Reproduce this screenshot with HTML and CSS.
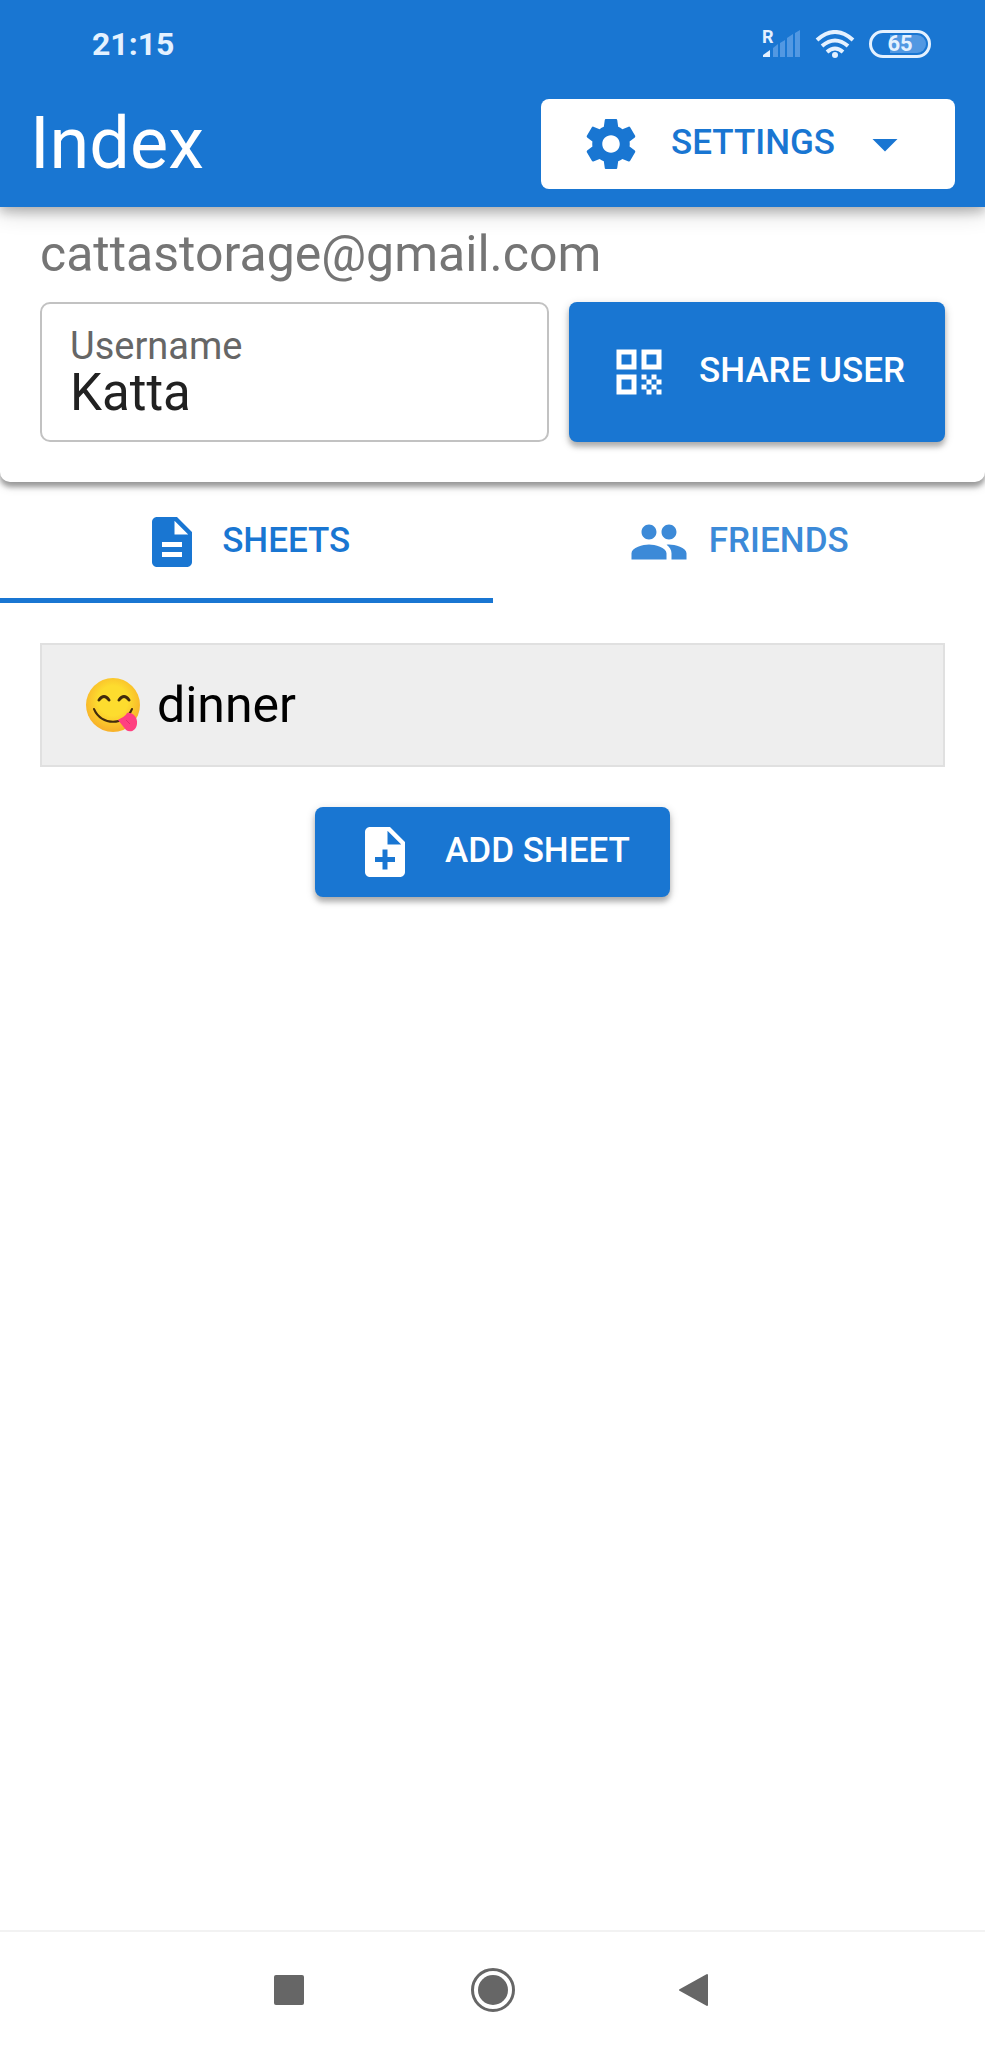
FILE: index.html
```html
<!DOCTYPE html>
<html lang="en">
<head>
<meta charset="utf-8">
<meta name="viewport" content="width=device-width, initial-scale=1">
<title>Index</title>
<link rel="stylesheet" href="styles.css">
</head>
<body>
<div class="app">
  <header class="header">
    <div class="status">
      <time class="clock">21:15</time>
      <div class="indicators">
        <svg class="signal" viewBox="0 0 38 28" role="img" aria-label="Roaming, weak signal">
          <text class="roaming" x="-1" y="13">R</text>
          <path fill="#e4f1ff" d="M0 27V25L7 20V27z"/>
          <path fill="#5298e2" d="M10 27V18L15 14V27zM17 27V13L22 10V27zM24 27V8L30 4V27zM32 27V3L37 0V27z"/>
        </svg>
        <svg class="wifi" viewBox="0 0 40 28" role="img" aria-label="Wi-Fi">
          <g fill="none" stroke="#e4f1ff" stroke-width="4">
            <path d="M2 10Q20 -6 38 10"/>
            <path d="M7 16Q20 5 33 16"/>
            <path d="M12 22Q20 15 28 22"/>
          </g>
          <circle cx="20" cy="25" r="3" fill="#e4f1ff"/>
        </svg>
        <div class="battery">65</div>
      </div>
    </div>
    <div class="toolbar">
      <h1 class="title">Index</h1>
      <button class="btn btn-light" type="button">
        <svg class="icon" viewBox="0 0 24 24" aria-hidden="true"><path d="M19.43 12.98c.04-.32.07-.64.07-.98s-.03-.66-.07-.98l2.11-1.65c.19-.15.24-.42.12-.64l-2-3.46c-.12-.22-.39-.3-.61-.22l-2.49 1c-.52-.4-1.08-.73-1.69-.98l-.38-2.65C14.46 2.18 14.25 2 14 2h-4c-.25 0-.46.18-.49.42l-.38 2.65c-.61.25-1.17.59-1.69.98l-2.49-1c-.23-.09-.49 0-.61.22l-2 3.46c-.13.22-.07.49.12.64l2.11 1.65c-.04.32-.07.65-.07.98s.03.66.07.98l-2.11 1.65c-.19.15-.24.42-.12.64l2 3.46c.12.22.39.3.61.22l2.49-1c.52.4 1.08.73 1.69.98l.38 2.65c.03.24.24.42.49.42h4c.25 0 .46-.18.49-.42l.38-2.65c.61-.25 1.17-.59 1.69-.98l2.49 1c.23.09.49 0 .61-.22l2-3.46c.12-.22.07-.49-.12-.64l-2.11-1.65zM12 15.5c-1.93 0-3.5-1.57-3.5-3.5s1.57-3.5 3.5-3.5 3.5 1.57 3.5 3.5-1.57 3.5-3.5 3.5z"/></svg>
        <span class="btn-text">SETTINGS</span>
        <svg class="icon caret" viewBox="0 0 24 24" aria-hidden="true"><path d="M7 10l5 5 5-5z"/></svg>
      </button>
    </div>
  </header>

  <section class="card">
    <p class="email">cattastorage@gmail.com</p>
    <div class="user-row">
      <div class="field">
        <label class="field-label" for="username">Username</label>
        <input class="field-input" id="username" type="text" value="Katta">
      </div>
      <button class="btn btn-primary" type="button">
        <svg class="icon" viewBox="0 0 24 24" aria-hidden="true"><path d="M3 11h8V3H3v8zm2-6h4v4H5V5zM3 21h8v-8H3v8zm2-6h4v4H5v-4zM13 3v8h8V3h-8zm6 6h-4V5h4v4zM19 19h2v2h-2zM13 13h2v2h-2zM15 15h2v2h-2zM13 17h2v2h-2zM15 19h2v2h-2zM17 17h2v2h-2zM17 13h2v2h-2zM19 15h2v2h-2z"/></svg>
        <span class="btn-text">SHARE USER</span>
      </button>
    </div>
  </section>

  <nav class="tabs" role="tablist">
    <button class="tab tab-active" type="button" role="tab" aria-selected="true">
      <svg class="icon" viewBox="0 0 24 24" aria-hidden="true"><path d="M14 2H6c-1.1 0-1.99.9-1.99 2L4 20c0 1.1.89 2 1.99 2H18c1.1 0 2-.9 2-2V8l-6-6zm2 16H8v-2h8v2zm0-4H8v-2h8v2zm-3-5V3.5L18.5 9H13z"/></svg>
      <span class="btn-text">SHEETS</span>
    </button>
    <button class="tab" type="button" role="tab" aria-selected="false">
      <svg class="icon" viewBox="0 0 24 24" aria-hidden="true"><path d="M16 11c1.66 0 2.99-1.34 2.99-3S17.66 5 16 5c-1.66 0-3 1.34-3 3s1.34 3 3 3zm-8 0c1.66 0 2.99-1.34 2.99-3S9.66 5 8 5C6.34 5 5 6.34 5 8s1.34 3 3 3zm0 2c-2.33 0-7 1.17-7 3.5V19h14v-2.5c0-2.33-4.67-3.5-7-3.5zm8 0c-.29 0-.62.02-.97.05 1.16.84 1.97 1.97 1.97 3.45V19h6v-2.5c0-2.33-4.67-3.5-7-3.5z"/></svg>
      <span class="btn-text">FRIENDS</span>
    </button>
  </nav>

  <main class="content">
    <a class="sheet" href="#dinner">
      <svg class="emoji" viewBox="0 0 56 56" role="img" aria-label="Face savoring food">
        <defs>
          <radialGradient id="face" cx="50%" cy="42%" r="55%">
            <stop offset="0.5" stop-color="#fddc2e"/>
            <stop offset="1" stop-color="#f8b32a"/>
          </radialGradient>
        </defs>
        <circle cx="28" cy="28" r="27" fill="url(#face)"/>
        <g fill="none" stroke="#422b0d" stroke-linecap="round">
          <path stroke-width="3" d="M14 23q5-7 10 0M34 23q5-7 10 0"/>
          <path stroke-width="2" d="M9 32C16 49 40 49 47 32"/>
        </g>
        <path fill="#ff4081" d="M33 43C36 41 41 39 42 36C47 35 53 40 52 47C51 54 45 56 41 53Z"/>
        <path fill="none" stroke="#e52d6e" stroke-width="1" d="M41 43L45 47"/>
      </svg>
      <span>dinner</span>
    </a>
    <button class="btn btn-primary" type="button">
      <svg class="icon" viewBox="0 0 24 24" aria-hidden="true"><path d="M14 2H6c-1.1 0-1.99.9-1.99 2L4 20c0 1.1.89 2 1.99 2H18c1.1 0 2-.9 2-2V8l-6-6zm2 14h-3v3h-2v-3H8v-2h3v-3h2v3h3v2zm-3-7V3.5L18.5 9H13z"/></svg>
      <span class="btn-text">ADD SHEET</span>
    </button>
  </main>

  <footer class="navbar">
    <button class="nav-btn" type="button" aria-label="Recent apps">
      <svg class="nav-icon" viewBox="0 0 46 46"><rect x="8" y="8" width="30" height="30" rx="2"/></svg>
    </button>
    <button class="nav-btn" type="button" aria-label="Home">
      <svg class="nav-icon" viewBox="0 0 46 46"><circle cx="23" cy="23" r="15"/><circle cx="23" cy="23" r="20.5" fill="none" stroke="#666" stroke-width="3"/></svg>
    </button>
    <button class="nav-btn" type="button" aria-label="Back">
      <svg class="nav-icon" viewBox="0 0 46 46"><path stroke="#666" stroke-width="2" stroke-linejoin="round" d="M6 23L33 8V38z"/></svg>
    </button>
  </footer>
</div>
</body>
</html>
```
FILE: styles.css
```css
* {
  box-sizing: border-box;
}

body {
  margin: 0;
  background: #fff;
  color: #000;
  font-family: Roboto, "Liberation Sans", sans-serif;
}

button {
  margin: 0;
  border: 0;
  font: inherit;
  cursor: pointer;
}

.app {
  display: flex;
  flex-direction: column;
  min-height: 100vh;
}

.header {
  position: relative;
  z-index: 1;
  background: #1976d2;
  color: #fff;
  box-shadow: 0 5px 10px rgba(0, 0, 0, 0.2), 0 2px 24px rgba(0, 0, 0, 0.24);
}

.status {
  display: flex;
  align-items: center;
  justify-content: space-between;
  padding: 25px 54px 18px 92px;
  color: #e4f1ff;
}

.clock {
  font-size: 32px;
  line-height: 38px;
  font-weight: 700;
}

.indicators {
  display: flex;
  align-items: center;
  gap: 14px;
}

.signal {
  width: 38px;
  height: 28px;
  overflow: visible;
}

.roaming {
  fill: #e4f1ff;
  font-size: 18px;
  font-weight: 700;
}

.wifi {
  width: 40px;
  height: 28px;
}

.battery {
  width: 62px;
  height: 28px;
  border: 3px solid #e4f1ff;
  border-radius: 14px;
  background: linear-gradient(to right, #1976d2 30%, #5298e2 30%) content-box;
  padding: 2px;
  font-size: 22px;
  line-height: 18px;
  font-weight: 700;
  text-align: center;
}

.toolbar {
  display: flex;
  align-items: center;
  justify-content: space-between;
  padding: 18px 30px;
}

.title {
  margin: 0;
  font-size: 72px;
  line-height: 84px;
  font-weight: 400;
}

.btn {
  display: flex;
  align-items: center;
  gap: 30px;
  min-height: 90px;
  padding: 15px 40px;
  border-radius: 8px;
  white-space: nowrap;
}

.btn-text {
  padding-bottom: 3px;
  font-size: 35px;
  line-height: 42px;
  font-weight: 500;
}

.btn-light {
  background: #fff;
  color: #1976d2;
}

.btn-primary {
  background: #1976d2;
  color: #fff;
  box-shadow: 0 3px 10px rgba(0, 0, 0, 0.2), 0 5px 5px rgba(0, 0, 0, 0.2);
}

.icon {
  flex: none;
  width: 60px;
  height: 60px;
  fill: currentColor;
}

.caret {
  margin-left: -10px;
}

.card {
  padding: 17px 40px 40px;
  border-radius: 0 0 10px 10px;
  background: #fff;
  box-shadow: 0 3px 12px rgba(0, 0, 0, 0.2), 0 5px 5px rgba(0, 0, 0, 0.3);
}

.email {
  margin: 0 0 18px;
  color: #757575;
  font-size: 50px;
  line-height: 60px;
}

.user-row {
  display: flex;
  gap: 20px;
}

.field {
  display: flex;
  flex: 1;
  flex-direction: column;
  min-width: 0;
  height: 140px;
  padding: 21px 28px;
  border: 2px solid #c2c2c2;
  border-radius: 10px;
}

.field-label {
  color: #666;
  font-size: 38px;
  line-height: 42px;
}

.field-input {
  width: 100%;
  height: 50px;
  padding: 0;
  border: 0;
  outline: 0;
  background: transparent;
  color: #212121;
  font: inherit;
  font-size: 51px;
  line-height: 50px;
}

.tabs {
  display: flex;
}

.tab {
  display: flex;
  flex: 1;
  align-items: center;
  justify-content: center;
  gap: 20px;
  padding: 30px 0 26px;
  border-bottom: 5px solid transparent;
  background: none;
  color: #3c8ad8;
}

.tab-active {
  border-bottom-color: #1976d2;
  color: #1976d2;
}

.content {
  display: flex;
  flex: 1;
  flex-direction: column;
  align-items: center;
  gap: 40px;
  padding: 40px;
}

.sheet {
  display: flex;
  align-items: center;
  gap: 16px;
  width: 100%;
  padding: 30px 43px;
  border: 2px solid #e0e0e0;
  background: #eee;
  color: #000;
  font-size: 50px;
  line-height: 60px;
  text-decoration: none;
}

.emoji {
  width: 56px;
  height: 56px;
}

.navbar {
  display: flex;
  justify-content: center;
  gap: 158px;
  padding: 35px 0;
  border-top: 2px solid #f2f2f2;
}

.nav-btn {
  padding: 0;
  background: none;
}

.nav-icon {
  display: block;
  width: 46px;
  height: 46px;
  fill: #666;
}
```
